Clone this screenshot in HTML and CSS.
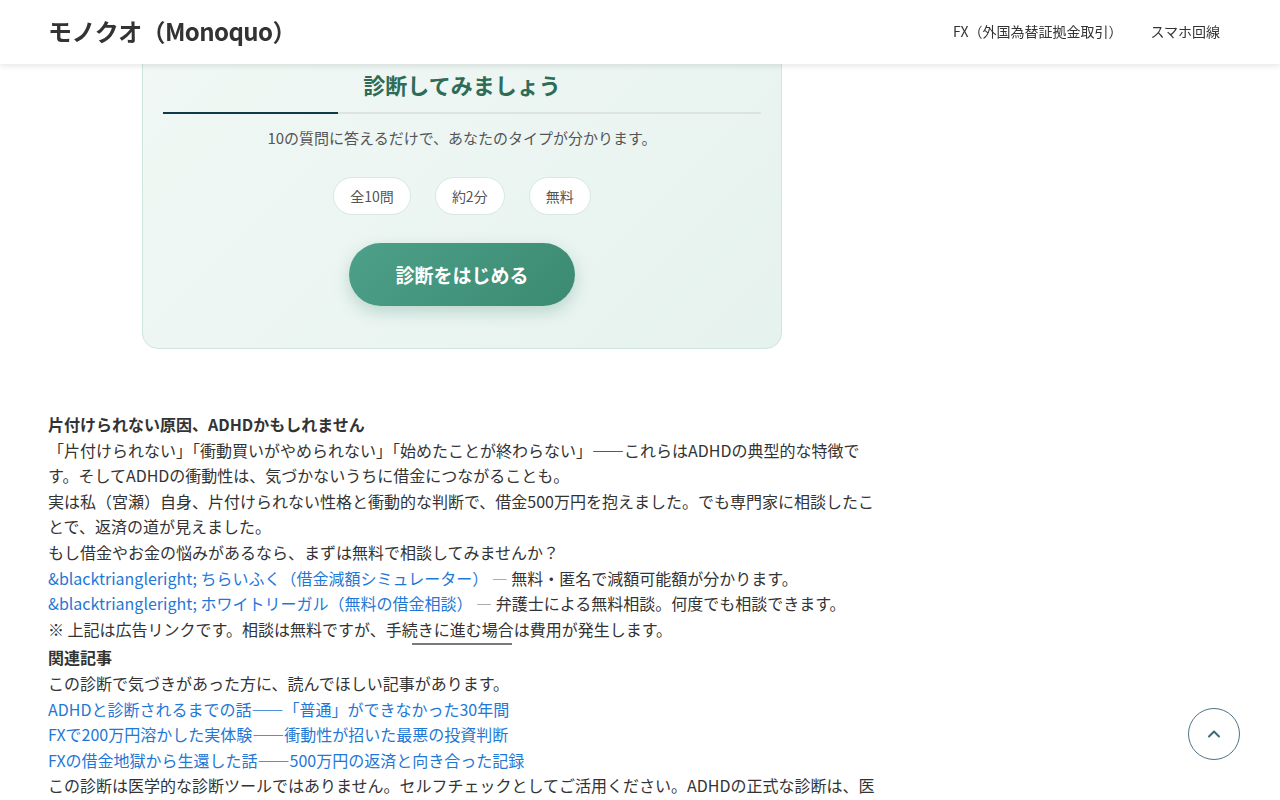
FILE: index.html
```html
<!DOCTYPE html>
<html lang="ja">
<head>
<meta charset="utf-8">
<title>モノクオ（Monoquo）</title>
<link rel="stylesheet" href="styles.css">
</head>
<body>
<header class="site-header">
  <a class="logo" href="#">モノクオ（Monoquo）</a>
  <nav class="nav">
    <a href="#">FX（外国為替証拠金取引）</a>
    <a href="#">スマホ回線</a>
  </nav>
</header>

<main class="main">
  <section class="card">
    <h2 class="card-title">診断してみましょう</h2>
    <div class="progress"><div class="progress-fill"></div></div>
    <p class="card-lead">10の質問に答えるだけで、あなたのタイプが分かります。</p>
    <div class="pills">
      <span class="pill">全10問</span>
      <span class="pill">約2分</span>
      <span class="pill">無料</span>
    </div>
    <button class="start-btn" type="button">診断をはじめる</button>
  </section>

  <div class="article">
    <p class="strong">片付けられない原因、ADHDかもしれません</p>
    <p>「片付けられない」「衝動買いがやめられない」「始めたことが終わらない」——これらはADHDの典型的な特徴です。そしてADHDの衝動性は、気づかないうちに借金につながることも。</p>
    <p>実は私（宮瀬）自身、片付けられない性格と衝動的な判断で、借金500万円を抱えました。でも専門家に相談したことで、返済の道が見えました。</p>
    <p>もし借金やお金の悩みがあるなら、まずは無料で相談してみませんか？</p>
    <p><a href="#">&amp;blacktriangleright; ちらいふく（借金減額シミュレーター）</a> <span class="dash">—</span> 無料・匿名で減額可能額が分かります。</p>
    <p><a href="#">&amp;blacktriangleright; ホワイトリーガル（無料の借金相談）</a> <span class="dash">—</span> 弁護士による無料相談。何度でも相談できます。</p>
    <p>※ 上記は広告リンクです。相談は無料ですが、手続きに進む場合は費用が発生します。</p>
    <hr class="sep">
    <p class="strong">関連記事</p>
    <p>この診断で気づきがあった方に、読んでほしい記事があります。</p>
    <p><a href="#">ADHDと診断されるまでの話——「普通」ができなかった30年間</a></p>
    <p><a href="#">FXで200万円溶かした実体験——衝動性が招いた最悪の投資判断</a></p>
    <p><a href="#">FXの借金地獄から生還した話——500万円の返済と向き合った記録</a></p>
    <p>この診断は医学的な診断ツールではありません。セルフチェックとしてご活用ください。ADHDの正式な診断は、医療機関で受けてください。</p>
  </div>
</main>

<a class="to-top" href="#" aria-label="ページトップへ">
  <svg width="16" height="16" viewBox="0 0 16 16" fill="none" stroke="currentColor" stroke-width="2" stroke-linecap="round" stroke-linejoin="round"><path d="M3 10.5 L8 5.5 L13 10.5"/></svg>
</a>
</body>
</html>
```

FILE: styles.css
```css
* { box-sizing: border-box; }

html, body {
  margin: 0;
  padding: 0;
}

body {
  font-family: "Noto Sans CJK JP", "Noto Sans", sans-serif;
  color: #333;
  background: #fff;
  font-size: 16px;
  line-height: 1.6;
}

a { text-decoration: none; }

.site-header {
  position: fixed;
  top: 0;
  left: 0;
  right: 0;
  height: 64px;
  background: #fff;
  box-shadow: 0 2px 6px rgba(0, 0, 0, 0.10);
  display: flex;
  align-items: center;
  justify-content: space-between;
  padding: 0 48px 2px;
  z-index: 10;
}

.logo {
  font-size: 24px;
  font-weight: 700;
  color: #333;
  letter-spacing: -0.6px;
}

.nav {
  display: flex;
  gap: 28px;
  padding-right: 12px;
}

.nav a {
  font-size: 14px;
  color: #333;
}

.main {
  width: 828px;
  margin-left: 48px;
  padding-top: 24px;
  padding-bottom: 40px;
}

.card {
  width: 640px;
  margin: 0 auto;
  border: 1px solid #cfe6de;
  border-radius: 16px;
  background: linear-gradient(135deg, #f1f8f5 0%, #e6f2ee 100%);
  padding: 43px 20px 42px;
  display: flex;
  flex-direction: column;
  align-items: center;
}

.card-title {
  margin: 0;
  font-size: 22px;
  line-height: 32px;
  font-weight: 700;
  color: #2e6c57;
}

.progress {
  width: 100%;
  height: 2px;
  background: #dce3e0;
  margin-top: 12px;
}

.progress-fill {
  width: 29.3%;
  height: 100%;
  background: #0f3a48;
}

.card-lead {
  margin: 12px 0 0;
  font-size: 15px;
  line-height: 24px;
  color: #555;
}

.pills {
  display: flex;
  gap: 24px;
  margin-top: 27px;
}

.pill {
  background: #fff;
  border: 1px solid #d6e9e2;
  border-radius: 999px;
  padding: 8px 16px;
  font-size: 14px;
  line-height: 20px;
  color: #555;
}

.start-btn {
  margin-top: 28px;
  border: none;
  border-radius: 999px;
  background: linear-gradient(135deg, #4da089 0%, #3b8a71 100%);
  color: #fff;
  font-family: inherit;
  font-size: 19px;
  font-weight: 700;
  line-height: 27px;
  padding: 18px 46px;
  box-shadow: 0 6px 16px rgba(61, 138, 113, 0.28);
  cursor: pointer;
}

.article {
  margin-top: 63px;
}

.article p {
  margin: 0;
}

.article .strong {
  font-weight: 700;
}

.article a {
  color: #1f78d6;
}

.dash {
  color: #999;
}

.sep {
  width: 100px;
  height: 2px;
  margin: 1px auto 0;
  border: none;
  background: #7a7a7a;
}

.to-top {
  position: fixed;
  right: 40px;
  bottom: 40px;
  width: 52px;
  height: 52px;
  border-radius: 50%;
  border: 1px solid #4d7584;
  background: #fff;
  color: #3e6b7a;
  display: flex;
  align-items: center;
  justify-content: center;
}
```
